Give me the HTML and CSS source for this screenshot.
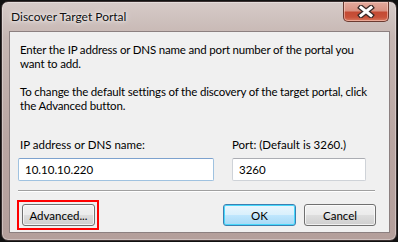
FILE: index.html
```html
<!DOCTYPE html>
<html lang="en">
<head>
    <meta charset="UTF-8">
    <title>Discover Target Portal</title>
    <link rel="stylesheet" href="styles.css">
</head>
<body>
    <div class="window">
        <div class="titlebar">
            <span class="title">Discover Target Portal</span>
            <button type="button" class="close">
                <svg width="18" height="13" viewBox="0 0 18 13">
                    <path d="M4 2.5 L14 10.5 M14 2.5 L4 10.5" stroke="#3a2a28" stroke-width="5.5" stroke-linecap="square"/>
                    <path d="M4 2.5 L14 10.5 M14 2.5 L4 10.5" stroke="#fff" stroke-width="3" stroke-linecap="square"/>
                </svg>
            </button>
        </div>
        <div class="client">
            <p class="intro">Enter the IP address or DNS name and port number of the portal you<br>want to add.</p>
            <p class="intro second">To change the default settings of the discovery of the target portal, click<br>the Advanced button.</p>

            <div class="fields">
                <div class="field ip">
                    <label>IP address or DNS name:</label>
                    <input type="text" class="focused" value="10.10.10.220">
                </div>
                <div class="field port">
                    <label>Port: (Default is 3260.)</label>
                    <input type="text" value="3260">
                </div>
            </div>

            <div class="separator"></div>

            <div class="buttons">
                <div class="highlight">
                    <button type="button" class="btn">Advanced...</button>
                </div>
                <div class="right">
                    <button type="button" class="btn default">OK</button>
                    <button type="button" class="btn">Cancel</button>
                </div>
            </div>
        </div>
    </div>
</body>
</html>
```

FILE: styles.css
```css
*{
    margin: 0;
    padding: 0;
    box-sizing: border-box;
}
body{
    width: 398px;
    height: 242px;
    background-color: #111;
    font-family: Lato, "Noto Sans", sans-serif;
    font-size: 11.5px;
    color: #000;
    overflow: hidden;
}
.window{
    margin: 1px;
    width: 396px;
    height: 240px;
    border: 1px solid #3a3030;
    border-radius: 7px;
    background: linear-gradient(180deg, #d6cbc8 0%, #c6b6b2 15%, #b9a5a1 60%, #b49f9b 100%);
    box-shadow: inset 0 0 0 1px rgba(255,255,255,0.35);
    display: flex;
    flex-direction: column;
}
.titlebar{
    height: 29px;
    display: flex;
    align-items: flex-start;
    justify-content: space-between;
}
.title{
    margin: 7px 0 0 9px;
    font-size: 12px;
    line-height: 16px;
    color: #101010;
    text-shadow: 0 0 6px rgba(255,255,255,0.9), 0 0 3px rgba(255,255,255,0.9);
}
.close{
    width: 46px;
    height: 20px;
    margin-right: 7px;
    border: 1px solid #6b3a30;
    border-top: none;
    border-radius: 0 0 5px 5px;
    background: linear-gradient(180deg, #e3aa9d 0%, #d99282 45%, #c44a33 55%, #c8523a 80%, #d97a60 100%);
    box-shadow: inset 0 0 0 1px rgba(255,220,210,0.5);
    display: flex;
    align-items: center;
    justify-content: center;
}
.client{
    margin: 0 6px 0 7px;
    height: 202px;
    border: 1px solid #8c8080;
    background-color: #f0f0f0;
    padding: 11px 13px 0 8px;
}
.intro{
    padding-left: 2px;
    line-height: 14px;
    letter-spacing: -0.18px;
    white-space: nowrap;
}
.intro.second{
    margin-top: 14px;
}
.fields{
    margin-top: 25px;
    display: flex;
    gap: 18px;
}
.field{
    display: flex;
    flex-direction: column;
    gap: 6px;
}
.field label{
    line-height: 14px;
}
.ip{
    width: 196px;
}
.ip label{
    padding-left: 2px;
}
.port{
    width: 134px;
}
.field input{
    height: 23px;
    border: 1px solid #cfd3d8;
    border-top-color: #abadb3;
    border-radius: 2px;
    background: #fff;
    font-family: inherit;
    font-size: 11.5px;
    padding: 0 6px;
    outline: none;
}
.field input.focused{
    border-color: #9fc2e0;
    border-top-color: #7da2ce;
}
.separator{
    margin: 9px 0 0 0;
    width: 357px;
    height: 2px;
    border-top: 1px solid #a0a0a0;
    border-bottom: 1px solid #fff;
}
.buttons{
    margin-top: 8px;
    display: flex;
    justify-content: space-between;
    align-items: center;
}
.highlight{
    margin-left: -1px;
    border: 2px solid #f00;
    padding: 2px 2px 2px 3px;
}
.right{
    display: flex;
    gap: 8px;
}
.btn{
    width: 73px;
    height: 22px;
    border: 1px solid #707070;
    border-radius: 3px;
    background: linear-gradient(180deg, #f2f2f2 0%, #ebebeb 48%, #dddddd 52%, #cfcfcf 100%);
    box-shadow: inset 0 0 0 1px rgba(255,255,255,0.7);
    font-family: inherit;
    font-size: 11.5px;
    color: #000;
}
.right .btn:last-child{
    width: 72px;
}
.btn.default{
    border-color: #3c7fb1;
    background: linear-gradient(180deg, #eaf6fd 0%, #d9f0fc 48%, #bee6fd 52%, #a7d9f5 100%);
    box-shadow: inset 0 0 0 1px #48d8fb;
}
```
